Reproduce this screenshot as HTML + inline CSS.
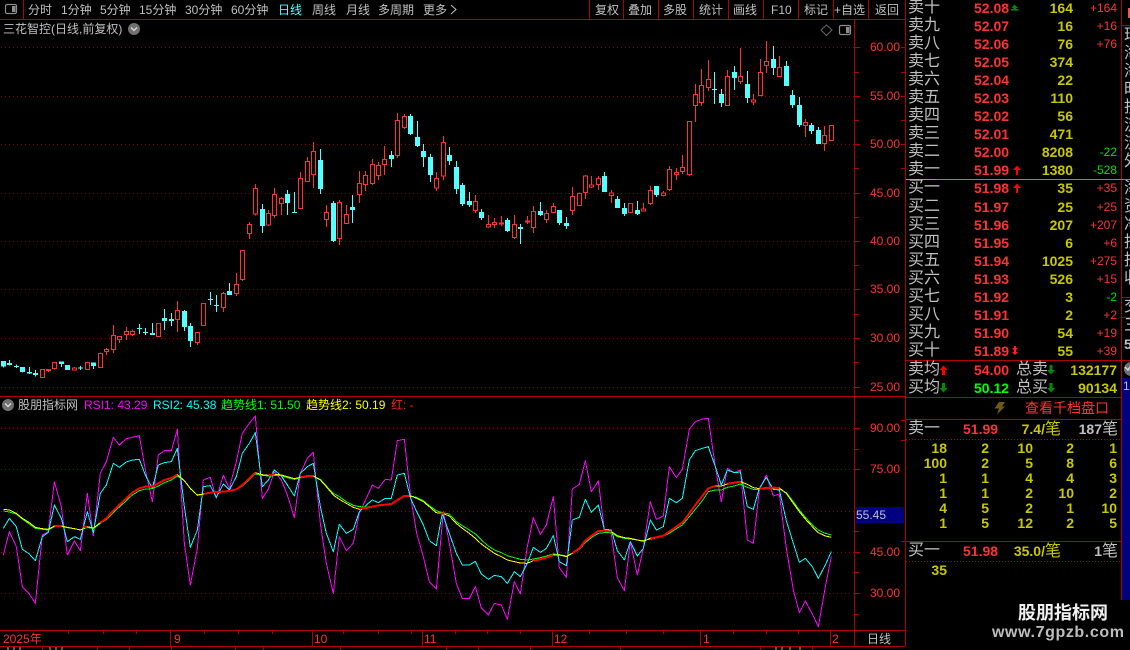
<!DOCTYPE html>
<html lang="zh">
<head>
<meta charset="utf-8">
<title>股朋指标网</title>
<style>
html,body{margin:0;padding:0;background:#000}
#p{position:relative;width:1130px;height:650px;overflow:hidden;background:#000;font-family:"Liberation Sans","WenQuanYi Zen Hei","Noto Sans CJK SC",sans-serif;color:#c0c0c0;font-size:12px}
#p svg.bg{position:absolute;left:0;top:0}
.t{position:absolute;white-space:nowrap;line-height:16px;height:16px}
.a{font-size:12px;color:#ff3232;left:870px}
.l{font-size:16px;color:#c0c0c0;left:908px}
.d{font-size:14px;font-weight:bold;color:#ff3232;left:974px}
.v{font-size:14px;font-weight:bold;color:#c8c800;right:57px;text-align:right}
.c{font-size:12px;color:#ff3232;right:13px;text-align:right}
.g{color:#00e000}
.y{font-size:14px;font-weight:bold;color:#c8c800;text-align:right}
.r{font-size:16px;color:#c0c0c0;left:1124px}
</style>
</head>
<body>
<div id="p">
<svg class="bg" width="1130" height="650" viewBox="0 0 1130 650" shape-rendering="crispEdges" fill="none">
<!-- grid -->
<g stroke="#8a0000" stroke-width="1" stroke-dasharray="1 3">
<path d="M1 47.5H855M1 96.5H855M1 144.5H855M1 193.5H855M1 241.5H855M1 289.5H855M1 338.5H855M1 387.5H855"/>
<path d="M1 428.5H855M1 469.5H855M1 511.5H855M1 552.5H855M1 593.5H855"/>
</g>
<!-- candles A -->
<g transform="translate(0 200) scale(.33333)">
<path stroke="#ff3232" stroke-width="3" d="M145 508V516M163 487V509M223 501V510M301 457V503M319 444V465M340 375V459M358 409V429M379 381V420M397 388V408M532 303V396M592 397V435M670 276V336M709 219V288M727 151V243M748 66V117"/>
<path stroke="#54ffff" stroke-width="3" d="M10 483V503M28 480V497M49 494V504M67 501V518M88 501V522M106 510V530M184 484V501M241 498V510M280 487V507M418 372V402M436 384V405M457 369V405M493 327V390M514 339V378M553 330V393M571 369V441M631 276V315M649 285V336M688 249V285"/>
<path stroke="#54ffff" stroke-width="15" d="M10 483V500M28 489V495M49 498V501M67 501V516M88 516V520M106 519V525M184 484V492M202 495V510M241 502V506M280 487V498M418 384V387M436 396V399M457 399V405M493 354V363M514 357V363M553 333V381M571 378V423M631 297V300M649 315V318M688 273V285"/>
<path stroke="#ff3232" stroke-width="3" fill="#000" d="M121 508H133V533H121ZM139 508H151V511H139ZM157 487H169V506H157ZM217 504H229V510H217ZM256 487H268V509H256ZM295 460H307V503H295ZM313 448H325V455H313ZM334 406H346V449H334ZM352 409H364V419H352ZM373 394H385V404H373ZM391 394H403V404H391ZM469 370H481V410H469ZM526 331H538V359H526ZM586 397H598V428H586ZM604 310H616V377H604ZM664 280H676V323H664ZM703 253H715V281H703ZM721 151H733V239H721ZM742 73H754V101H742Z"/>
</g>
<!-- candles B -->
<g transform="translate(250 100) scale(.33333)">
<path stroke="#ff3232" stroke-width="3" d="M16 252V347M55 330V378M73 264V354M94 291V345M151 216V327M172 171V246M190 126V264M229 315V381M268 300V435M289 315V372M328 213V309M346 213V273M367 177V255M385 186V240M403 138V225M442 39V174M463 42V87M559 216V273M580 108V240M676 285V339M715 345V384M733 354V384M754 348V378M793 345V417M832 348V372M850 318V399M889 330V369"/>
<path stroke="#54ffff" stroke-width="3" d="M37 312V399M112 270V345M133 276V339M211 147V282M250 303V426M307 285V369M424 153V201M481 42V105M502 63V141M520 132V201M541 162V246M598 141V195M619 183V282M637 249V318M658 276V321M694 327V360M772 354V396M811 372V432M871 306V348"/>
<path stroke="#54ffff" stroke-width="15" d="M37 327V378M112 282V309M133 336V339M211 180V267M250 309V423M307 321V330M424 165V177M481 48V102M502 111V138M520 153V171M541 171V225M598 165V183M619 201V267M637 255V312M658 303V315M694 336V354M772 360V393M811 381V387M871 333V345"/>
<path stroke="#ff3232" stroke-width="3" fill="#000" d="M10 265H22V342H10ZM49 340H61V375H49ZM67 283H79V347H67ZM88 295H100V311H88ZM145 235H157V326H145ZM166 184H178V245H166ZM184 154H196V224H184ZM223 337H235V359H223ZM262 307H274V416H262ZM283 343H295V371H283ZM322 250H334V284H322ZM340 226H352V254H340ZM361 193H373V251H361ZM379 196H391V227H379ZM397 178H409V194H397ZM436 61H448V167H436ZM457 49H469V83H457ZM553 235H565V264H553ZM574 127H586V228H574ZM670 304H682V332H670ZM709 373H721V381H709ZM727 367H739V374H727ZM748 369H760V372H748ZM787 373H799V413H787ZM826 363H838V366H826ZM844 334H856V383H844ZM883 340H895V359H883Z"/>
</g>
<!-- candles C -->
<g transform="translate(540 30) scale(.33333)">
<path stroke="#ff3232" stroke-width="3" d="M40 519V548M97 471V555M118 487V527M136 435V507M154 438V474M175 438V480M214 480V519M310 519V543M331 468V525M370 483V500M388 408V483M409 414V450M427 375V432M448 274V438M466 162V276M484 117V228M505 90V183M562 120V228M601 54V162M640 192V225M661 87V198M679 33V129M718 78V141M796 267V321M853 288V363"/>
<path stroke="#54ffff" stroke-width="3" d="M58 540V585M79 561V597M193 426V486M232 498V534M253 519V558M292 513V555M349 468V501M523 126V222M544 177V231M583 108V180M622 123V219M700 48V135M739 93V168M757 180V234M778 201V291M814 279V312M835 291V342"/>
<path stroke="#54ffff" stroke-width="15" d="M58 540V579M79 579V588M193 438V486M232 507V534M253 534V552M292 540V552M349 468V495M523 177V180M544 192V219M583 126V144M622 162V204M700 87V114M739 108V168M757 195V225M778 225V285M814 285V303M835 300V342"/>
<path stroke="#ff3232" stroke-width="3" fill="#000" d="M34 529H46V548H34ZM91 499H103V542H91ZM112 490H124V527H112ZM130 438H142V488H130ZM148 465H160V471H148ZM169 445H181V464H169ZM208 489H220V497H208ZM265 520H277V548H265ZM304 537H316V543H304ZM325 481H337V521H325ZM364 489H376V497H364ZM382 418H394V479H382ZM403 427H415V434H403ZM421 412H433V425H421ZM442 274H454V434H442ZM460 193H472V227H460ZM478 166H490V218H478ZM499 148H511V173H499ZM556 139H568V227H556ZM595 139H607V155H595ZM634 210H646V216H634ZM655 127H667V197H655ZM673 94H685V107H673ZM712 112H724V140H712ZM790 277H802V287H790ZM847 316H859V341H847ZM868 286H880V332H868Z"/>
</g>
<!-- indicator lines -->
<g transform="translate(0 390) scale(.33333)" stroke-width="3" stroke-linejoin="round">
<path stroke="#ff00ff" d="M10 495L28 425L49 470L67 590L88 612L106 640L127 435L145 425L163 275L184 350L202 495L223 453L241 482L262 310L280 438L301 250L319 215L340 142L358 165L379 146L397 142L418 137L436 240L457 335L475 195L493 182L514 182L532 118L553 460L571 585L592 475L610 270L631 262L649 325L670 256L688 295L709 215L727 130L748 100L766 78L787 325L805 297L823 245L844 270L862 315L883 383L901 250L922 205L940 187L961 400L979 520L1000 610L1018 440L1039 482L1060 460L1078 370L1099 325L1117 285L1135 295L1156 268L1174 270L1192 152L1213 148L1232 320L1250 430L1270 500L1288 575"/>
<path stroke="#00ffff" d="M10 415L28 385L49 410L67 478L88 492L106 512L127 440L145 427L163 345L184 385L202 455L223 440L241 448L262 365L280 428L301 310L319 285L340 220L358 232L379 216L397 210L418 208L436 255L457 295L475 225L493 218L514 215L532 175L553 350L571 472L592 420L610 290L631 287L649 322L670 282L688 300L709 260L727 190L748 160L766 128L787 290L805 270L823 240L844 258L862 285L883 318L901 250L922 230L940 220L961 350L979 430L1000 485L1018 403L1039 430L1060 418L1078 365L1099 345L1117 330L1135 338L1156 325L1174 325L1192 255L1213 250L1232 325L1250 365L1270 405L1288 452"/>
<path stroke="#00ff00" d="M10 363L28 366L49 372L67 387L88 402L106 415L127 418L145 420L163 410L184 409L202 413L223 416L241 420L262 412L280 416L301 400L319 389L340 368L358 351L379 332L397 315L418 302L436 297L457 296L475 288L493 278L514 270L532 258L553 272L571 296L592 316L610 313L631 309L649 307L670 306L688 304L709 299L727 288L748 269L766 252L787 256L805 258L823 257L844 257L862 263L883 268L901 264L922 260L940 259L961 268L979 288L1000 310L1018 320L1039 335L1060 346L1078 350L1099 351L1117 349L1135 345L1156 343L1174 341L1192 330L1213 319L1232 318L1250 322L1270 332L1288 347"/>
<path stroke="#ffff00" d="M10 358L28 360L49 370L67 385L88 398L106 412L127 416L145 418L163 408L184 408L202 412L223 416L241 420L262 410L280 414L301 398L319 385L340 362L358 345L379 325L397 308L418 295L436 290L457 290L475 280L493 270L514 264L532 254L553 272L571 295L592 315L610 312L631 308L649 306L670 305L688 303L709 298L727 285L748 265L766 248L787 254L805 256L823 253L844 255L862 260L883 266L901 262L922 258L940 258L961 270L979 290L1000 315L1018 328L1039 340L1060 352L1078 358L1099 354L1117 350L1135 346L1156 344L1174 342L1192 330L1213 318L1232 318L1250 325L1270 335L1288 350"/>
<path stroke="#ff0000" stroke-width="6" d="M163 408L184 408M250 412L262 410M301 398L319 385L340 362L358 345L379 325L397 308L418 295L436 290L457 290L475 280L493 270L514 264L532 254M610 312L631 308L649 306L670 305L688 303L709 298L727 285L748 265L766 248M805 256L823 253M901 262L922 258L940 258M1078 355L1099 354L1117 350L1135 346L1156 344L1174 342L1192 330L1213 318L1228 318"/>
</g>
<g transform="translate(430 390) scale(.33333)" stroke-width="3" stroke-linejoin="round">
<path stroke="#ff00ff" d="M-2 575L19 597L40 365L58 460L79 580L97 626L118 626L136 590L154 654L175 675L193 640L214 645L232 688L253 575L271 612L292 470L310 383L331 433L349 405L370 320L388 533L409 562L427 297L448 283L466 212L484 305L505 273L523 420L544 432L562 563L583 602L601 455L622 555L640 475L661 335L679 388L700 378L718 230L739 263L757 238L778 118L796 95L817 87L835 85L856 230L874 335L892 235L913 248L931 240L952 450L970 460L988 300L1009 255L1030 318L1048 312L1069 475L1090 600L1108 668L1126 633L1147 672L1165 710L1186 590L1204 500"/>
<path stroke="#00ffff" d="M-2 452L19 467L37 370L58 430L79 490L97 525L118 525L136 514L154 552L175 568L193 556L214 560L232 580L253 545L271 560L292 520L310 472L331 487L349 475L370 437L388 515L409 527L427 390L448 382L466 328L484 367L505 345L523 418L544 420L562 482L583 510L601 455L622 498L640 475L661 390L679 420L700 410L718 325L739 338L757 325L778 210L796 182L817 175L835 170L856 230L874 285L892 240L913 248L931 246L952 350L970 358L988 295L1009 262L1030 298L1048 300L1069 392L1090 460L1108 517L1126 505L1147 530L1165 565L1186 525L1204 485"/>
<path stroke="#00ff00" d="M-2 347L19 362L37 368L58 372L79 395L97 407L118 420L136 432L154 450L175 468L193 480L214 488L232 497L253 503L271 508L292 510L310 507L331 503L349 498L370 492L388 494L409 498L427 490L448 478L466 458L484 443L505 430L523 428L544 428L562 440L583 445L601 447L622 450L640 452L661 447L679 444L700 438L718 430L739 416L757 405L778 380L796 358L817 332L835 305L856 300L874 300L892 292L913 288L931 282L952 292L970 298L988 298L1009 296L1030 296L1048 297L1069 308L1090 335L1108 360L1126 382L1147 405L1165 420L1186 430L1204 435"/>
<path stroke="#ffff00" d="M-2 350L19 368L37 370L58 378L79 400L97 415L118 430L136 445L154 462L175 477L193 490L214 500L232 510L253 515L271 519L292 520L310 512L331 508L349 503L370 495L388 495L409 500L427 490L448 475L466 452L484 438L505 423L523 422L544 425L562 437L583 443L601 445L622 450L640 454L661 445L679 442L700 437L718 425L739 410L757 398L778 370L796 345L817 318L835 295L856 288L874 288L892 282L913 278L931 275L952 283L970 293L988 296L1009 294L1030 293L1048 294L1069 310L1090 340L1108 365L1126 387L1147 410L1165 428L1186 438L1204 442"/>
<path stroke="#ff0000" stroke-width="6" d="M31 370L43 370M310 512L331 508L349 503L370 495M427 490L448 475L466 452L484 438L505 423L523 422L544 425M661 445L679 442L700 437L718 425L739 410L757 398L778 370L796 345L817 318L835 295L856 288M892 282L913 278L931 275M988 296L1009 294L1030 293L1048 294"/>
</g>
<!-- frame lines -->
<g stroke="#b00000" stroke-width="1">
<path d="M0 19.5H905.5M23.5 0V19M589.5 0V19M623.5 0V19M658.5 0V19M693.5 0V19M728.5 0V19M763.5 0V19M798.5 0V19M833.5 0V19M868.5 0V19M905.5 0V646"/>
<path d="M854.5 19V646M0 396.5H905M0 630.5H905M0 646.5H905"/>
<path d="M855 47.5H860M855 72.5H859M855 96.5H860M855 120.5H859M855 144.5H860M855 168.5H859M855 193.5H860M855 217.5H859M855 241.5H860M855 265.5H859M855 289.5H860M855 314.5H859M855 338.5H860M855 362.5H859M855 387.5H860"/>
<path d="M855 428.5H860M855 449.5H859M855 469.5H860M855 531.5H859M855 552.5H860M855 572.5H859M855 593.5H860M855 614.5H859"/>
<path d="M901 47.5H905M901 72.5H905M901 96.5H905M901 120.5H905M901 144.5H905M901 168.5H905M901 420.5H905M901 440.5H905M901 541.5H905"/>
<path d="M170.5 630V646M312.5 630V646M422.5 630V646M552.5 630V646M700.5 630V646M830.5 630V646M68.5 631V634M103.5 631V634M136.5 631V634M204.5 631V634M238.5 631V634M272.5 631V634M343.5 631V634M378.5 631V634M411.5 631V634M455.5 631V634M487.5 631V634M520.5 631V634M589.5 631V634M626.5 631V634M663.5 631V634M733.5 631V634M766.5 631V634M798.5 631V634"/>
<path d="M42.5 647V650M97.5 647V650M129.5 647V650M171.5 647V650M235.5 647V650M263.5 647V650M340.5 647V650M446.5 647V650M478.5 647V650M530.5 647V650M620.5 647V650M760.5 647V650M812.5 647V650"/>
<path d="M1121.5 0V600M906 360.5H1121M906 397.5H1121M906 419.5H1121M906 541.5H1121M1121 25.5H1130M1121 297.5H1130M1121 317.5H1130M1121 360.5H1130"/>
<path stroke-dasharray="1 2" d="M906 439.5H1121M906 561.5H1121"/>
</g>
<path d="M906 179.5H937" stroke="#c89030"/>
<path d="M937 179.5H1130" stroke="#5090c8"/>
<path d="M8 647V650M14 647V650M20 647V650" stroke="#c0c0c0"/>
<path d="M50 647V650M56 647V650M62 647V650M776 647V650M782 647V650M790 647V650M800 647V650" stroke="#c8c800"/>
<!-- right strip -->
<rect x="1122" y="378" width="8" height="222" fill="#000080"/>
<rect x="856" y="507" width="48" height="16" fill="#000080"/>
<rect x="1128" y="8" width="2" height="10" fill="#ff5050"/>
<circle cx="1131" cy="369" r="7" fill="#707070"/>
<!-- top-left icon -->
<g shape-rendering="auto">
<rect x="5.5" y="4.5" width="11" height="9" rx="1.5" stroke="#8c8c8c" stroke-width="1.2"/>
<rect x="12" y="6" width="3.5" height="6" fill="#8c8c8c"/>
<rect x="839.5" y="25.5" width="11" height="9" rx="1.5" stroke="#8c8c8c" stroke-width="1.2"/>
<rect x="846" y="27" width="3.5" height="6" fill="#8c8c8c"/>
<path d="M826.5 25L832 30L826.5 35.5L821 30Z" stroke="#666" stroke-width="1"/>
<circle cx="134" cy="29" r="6" fill="#707070"/>
<path d="M131 27.5L134 30.5L137 27.5" stroke="#ddd" stroke-width="1.3"/>
<circle cx="8" cy="405" r="6" fill="#707070"/>
<path d="M5 403.5L8 406.5L11 403.5" stroke="#ddd" stroke-width="1.3"/>
<path d="M1125 367L1128 370L1131 366" stroke="#ddd" stroke-width="1.5"/>
<path d="M451 5L456 9.500L451 14" stroke="#c0c0c0" stroke-width="1"/>
<!-- lightning -->
<path d="M999 402H1005L1002 406.5H1005L997 414.5L999 408.5H994.5Z" fill="#6e5c10"/>
<!-- order-book arrows -->
<path d="M1014.500 4.500L1018 8H1016V9H1018.500V10.500H1011V9H1013.500V8H1011.500Z" fill="#008a00"/>
<path d="M1017 165.500L1021 170H1018V175H1016V170H1013Z" fill="#ff0000"/>
<path d="M1017 183.500L1021 188H1018V193H1016V188H1013Z" fill="#ff0000"/>
<path d="M1012 348H1018L1015 351ZM1012 352H1018L1015 355ZM1014 346H1016V353H1014Z" fill="#ff2020"/>
<path d="M943.500 365.500L947.500 370H945V375H942V370H939.500Z" fill="#ff0000"/>
<path d="M943.500 392.500L947.500 388H945V383H942V388H939.500Z" fill="#008a00"/>
<path d="M1051 374.500L1055 370H1052.500V365H1049.500V370H1047Z" fill="#008a00"/>
<path d="M1051 392.500L1055 388H1052.500V383H1049.500V388H1047Z" fill="#008a00"/>
</g>
</svg>

<!-- toolbar -->
<span class="t" style="left:28px;top:2px">分时</span>
<span class="t" style="left:61px;top:2px">1分钟</span>
<span class="t" style="left:100px;top:2px">5分钟</span>
<span class="t" style="left:139px;top:2px">15分钟</span>
<span class="t" style="left:185px;top:2px">30分钟</span>
<span class="t" style="left:231px;top:2px">60分钟</span>
<span class="t" style="left:278px;top:2px;color:#54ffff">日线</span>
<span class="t" style="left:312px;top:2px">周线</span>
<span class="t" style="left:346px;top:2px">月线</span>
<span class="t" style="left:378px;top:2px">多周期</span>
<span class="t" style="left:423px;top:2px">更多</span>
<span class="t" style="left:595px;top:2px">复权</span>
<span class="t" style="left:628px;top:2px">叠加</span>
<span class="t" style="left:663px;top:2px">多股</span>
<span class="t" style="left:699px;top:2px">统计</span>
<span class="t" style="left:733px;top:2px">画线</span>
<span class="t" style="left:771px;top:2px">F10</span>
<span class="t" style="left:804px;top:2px">标记</span>
<span class="t" style="left:834px;top:2px">+自选</span>
<span class="t" style="left:875px;top:2px">返回</span>
<span class="t" style="left:3px;top:21px">三花智控(日线,前复权)</span>

<!-- main axis -->
<span class="t a" style="top:39px">60.00</span>
<span class="t a" style="top:88px">55.00</span>
<span class="t a" style="top:136px">50.00</span>
<span class="t a" style="top:185px">45.00</span>
<span class="t a" style="top:233px">40.00</span>
<span class="t a" style="top:281px">35.00</span>
<span class="t a" style="top:330px">30.00</span>
<span class="t a" style="top:379px">25.00</span>

<!-- indicator legend -->
<span class="t" style="left:18px;top:397px">股朋指标网</span>
<span class="t" style="left:84px;top:397px;color:#ff00ff">RSI1: 43.29</span>
<span class="t" style="left:153px;top:397px;color:#00ffff">RSI2: 45.38</span>
<span class="t" style="left:221px;top:397px;color:#00ff00">趋势线1: 51.50</span>
<span class="t" style="left:306px;top:397px;color:#ffff00">趋势线2: 50.19</span>
<span class="t" style="left:391px;top:397px;color:#ff2020">红: -</span>
<span class="t a" style="top:420px">90.00</span>
<span class="t a" style="top:461px">75.00</span>
<span class="t a" style="top:544px">45.00</span>
<span class="t a" style="top:585px">30.00</span>
<span class="t" style="left:856px;top:507px;color:#c0c0c0">55.45</span>

<!-- date axis -->
<span class="t" style="left:3px;top:631px;color:#ff3232">2025年</span>
<span class="t" style="left:174px;top:631px;color:#ff3232">9</span>
<span class="t" style="left:314px;top:631px;color:#ff3232">10</span>
<span class="t" style="left:424px;top:631px;color:#ff3232">11</span>
<span class="t" style="left:554px;top:631px;color:#ff3232">12</span>
<span class="t" style="left:703px;top:631px;color:#ff3232">1</span>
<span class="t" style="left:832px;top:631px;color:#ff3232">2</span>
<span class="t" style="left:867px;top:631px;font-size:12px">日线</span>

<!-- order book -->
<span class="t l" style="top:0">卖十</span><span class="t d" style="top:0">52.08</span><span class="t v" style="top:0">164</span><span class="t c" style="top:0">+164</span>
<span class="t l" style="top:18px">卖九</span><span class="t d" style="top:18px">52.07</span><span class="t v" style="top:18px">16</span><span class="t c" style="top:18px">+16</span>
<span class="t l" style="top:36px">卖八</span><span class="t d" style="top:36px">52.06</span><span class="t v" style="top:36px">76</span><span class="t c" style="top:36px">+76</span>
<span class="t l" style="top:54px">卖七</span><span class="t d" style="top:54px">52.05</span><span class="t v" style="top:54px">374</span>
<span class="t l" style="top:72px">卖六</span><span class="t d" style="top:72px">52.04</span><span class="t v" style="top:72px">22</span>
<span class="t l" style="top:90px">卖五</span><span class="t d" style="top:90px">52.03</span><span class="t v" style="top:90px">110</span>
<span class="t l" style="top:108px">卖四</span><span class="t d" style="top:108px">52.02</span><span class="t v" style="top:108px">56</span>
<span class="t l" style="top:126px">卖三</span><span class="t d" style="top:126px">52.01</span><span class="t v" style="top:126px">471</span>
<span class="t l" style="top:144px">卖二</span><span class="t d" style="top:144px">52.00</span><span class="t v" style="top:144px">8208</span><span class="t c g" style="top:144px">-22</span>
<span class="t l" style="top:162px">卖一</span><span class="t d" style="top:162px">51.99</span><span class="t v" style="top:162px">1380</span><span class="t c g" style="top:162px">-528</span>
<span class="t l" style="top:180px">买一</span><span class="t d" style="top:180px">51.98</span><span class="t v" style="top:180px">35</span><span class="t c" style="top:180px">+35</span>
<span class="t l" style="top:199px">买二</span><span class="t d" style="top:199px">51.97</span><span class="t v" style="top:199px">25</span><span class="t c" style="top:199px">+25</span>
<span class="t l" style="top:217px">买三</span><span class="t d" style="top:217px">51.96</span><span class="t v" style="top:217px">207</span><span class="t c" style="top:217px">+207</span>
<span class="t l" style="top:235px">买四</span><span class="t d" style="top:235px">51.95</span><span class="t v" style="top:235px">6</span><span class="t c" style="top:235px">+6</span>
<span class="t l" style="top:253px">买五</span><span class="t d" style="top:253px">51.94</span><span class="t v" style="top:253px">1025</span><span class="t c" style="top:253px">+275</span>
<span class="t l" style="top:271px">买六</span><span class="t d" style="top:271px">51.93</span><span class="t v" style="top:271px">526</span><span class="t c" style="top:271px">+15</span>
<span class="t l" style="top:289px">买七</span><span class="t d" style="top:289px">51.92</span><span class="t v" style="top:289px">3</span><span class="t c g" style="top:289px">-2</span>
<span class="t l" style="top:307px">买八</span><span class="t d" style="top:307px">51.91</span><span class="t v" style="top:307px">2</span><span class="t c" style="top:307px">+2</span>
<span class="t l" style="top:325px">买九</span><span class="t d" style="top:325px">51.90</span><span class="t v" style="top:325px">54</span><span class="t c" style="top:325px">+19</span>
<span class="t l" style="top:343px">买十</span><span class="t d" style="top:343px">51.89</span><span class="t v" style="top:343px">55</span><span class="t c" style="top:343px">+39</span>

<span class="t l" style="top:362px">卖均</span><span class="t d" style="top:362px">54.00</span><span class="t l" style="left:1016px;top:362px">总卖</span><span class="t v" style="top:362px;right:13px">132177</span>
<span class="t l" style="top:380px">买均</span><span class="t d" style="top:380px;color:#00ff00">50.12</span><span class="t l" style="left:1016px;top:380px">总买</span><span class="t v" style="top:380px;right:13px">90134</span>

<span class="t" style="left:1025px;top:400px;font-size:14px;color:#ff3232">查看千档盘口</span>

<span class="t l" style="top:421px">卖一</span>
<span class="t d" style="left:963px;top:421px">51.99</span>
<span class="t y" style="right:69px;top:421px">7.4/<span style="font-size:16px;font-weight:normal">笔</span></span>
<span class="t y" style="right:12px;top:421px;color:#c0c0c0">187<span style="font-size:16px;font-weight:normal">笔</span></span>

<span class="t y" style="right:183px;top:440px">18</span><span class="t y" style="right:141px;top:440px">2</span><span class="t y" style="right:97px;top:440px">10</span><span class="t y" style="right:56px;top:440px">2</span><span class="t y" style="right:13px;top:440px">1</span>
<span class="t y" style="right:183px;top:455px">100</span><span class="t y" style="right:141px;top:455px">2</span><span class="t y" style="right:97px;top:455px">5</span><span class="t y" style="right:56px;top:455px">8</span><span class="t y" style="right:13px;top:455px">6</span>
<span class="t y" style="right:183px;top:470px">1</span><span class="t y" style="right:141px;top:470px">1</span><span class="t y" style="right:97px;top:470px">4</span><span class="t y" style="right:56px;top:470px">4</span><span class="t y" style="right:13px;top:470px">3</span>
<span class="t y" style="right:183px;top:485px">1</span><span class="t y" style="right:141px;top:485px">1</span><span class="t y" style="right:97px;top:485px">2</span><span class="t y" style="right:56px;top:485px">10</span><span class="t y" style="right:13px;top:485px">2</span>
<span class="t y" style="right:183px;top:500px">4</span><span class="t y" style="right:141px;top:500px">5</span><span class="t y" style="right:97px;top:500px">2</span><span class="t y" style="right:56px;top:500px">1</span><span class="t y" style="right:13px;top:500px">10</span>
<span class="t y" style="right:183px;top:515px">1</span><span class="t y" style="right:141px;top:515px">5</span><span class="t y" style="right:97px;top:515px">12</span><span class="t y" style="right:56px;top:515px">2</span><span class="t y" style="right:13px;top:515px">5</span>

<span class="t l" style="top:543px">买一</span>
<span class="t d" style="left:963px;top:543px">51.98</span>
<span class="t y" style="right:69px;top:543px">35.0/<span style="font-size:16px;font-weight:normal">笔</span></span>
<span class="t y" style="right:12px;top:543px;color:#c0c0c0">1<span style="font-size:16px;font-weight:normal">笔</span></span>
<span class="t y" style="right:183px;top:562px">35</span>

<!-- clipped far-right column -->
<div style="position:absolute;left:1124px;top:0;width:6px;height:378px;overflow:hidden">
<span class="t" style="left:0;top:28px;font-size:16px">珉</span>
<span class="t" style="left:0;top:46px;font-size:16px">海</span>
<span class="t" style="left:0;top:64px;font-size:16px">海</span>
<span class="t" style="left:0;top:82px;font-size:16px">时</span>
<span class="t" style="left:0;top:100px;font-size:16px">技</span>
<span class="t" style="left:0;top:118px;font-size:16px">流</span>
<span class="t" style="left:0;top:136px;font-size:16px">流</span>
<span class="t" style="left:0;top:154px;font-size:16px">外</span>
<span class="t" style="left:0;top:181px;font-size:16px">海</span>
<span class="t" style="left:0;top:199px;font-size:16px">资</span>
<span class="t" style="left:0;top:217px;font-size:16px">净</span>
<span class="t" style="left:0;top:235px;font-size:16px">技</span>
<span class="t" style="left:0;top:253px;font-size:16px">技</span>
<span class="t" style="left:0;top:271px;font-size:16px">收</span>
<span class="t" style="left:0;top:299px;font-size:16px">交</span>
<span class="t" style="left:0;top:318px;font-size:16px">三</span>
<span class="t" style="left:0;top:336px;font-size:14px;font-weight:bold">5</span>
</div>
<span class="t" style="left:1123px;top:378px;color:#c0c0c0">1</span>

<!-- watermark -->
<div style="position:absolute;left:906px;top:600px;width:224px;height:50px;background:#000"></div>
<span class="t" style="left:1018px;top:604px;height:18px;line-height:18px;font-size:18px;font-weight:bold;color:#f0f0f0">股朋指标网</span>
<span class="t" style="left:992px;top:625px;font-size:16px;font-weight:bold;letter-spacing:.6px;color:#bebebe">www.7gpzb.com</span>
</div>
</body>
</html>
